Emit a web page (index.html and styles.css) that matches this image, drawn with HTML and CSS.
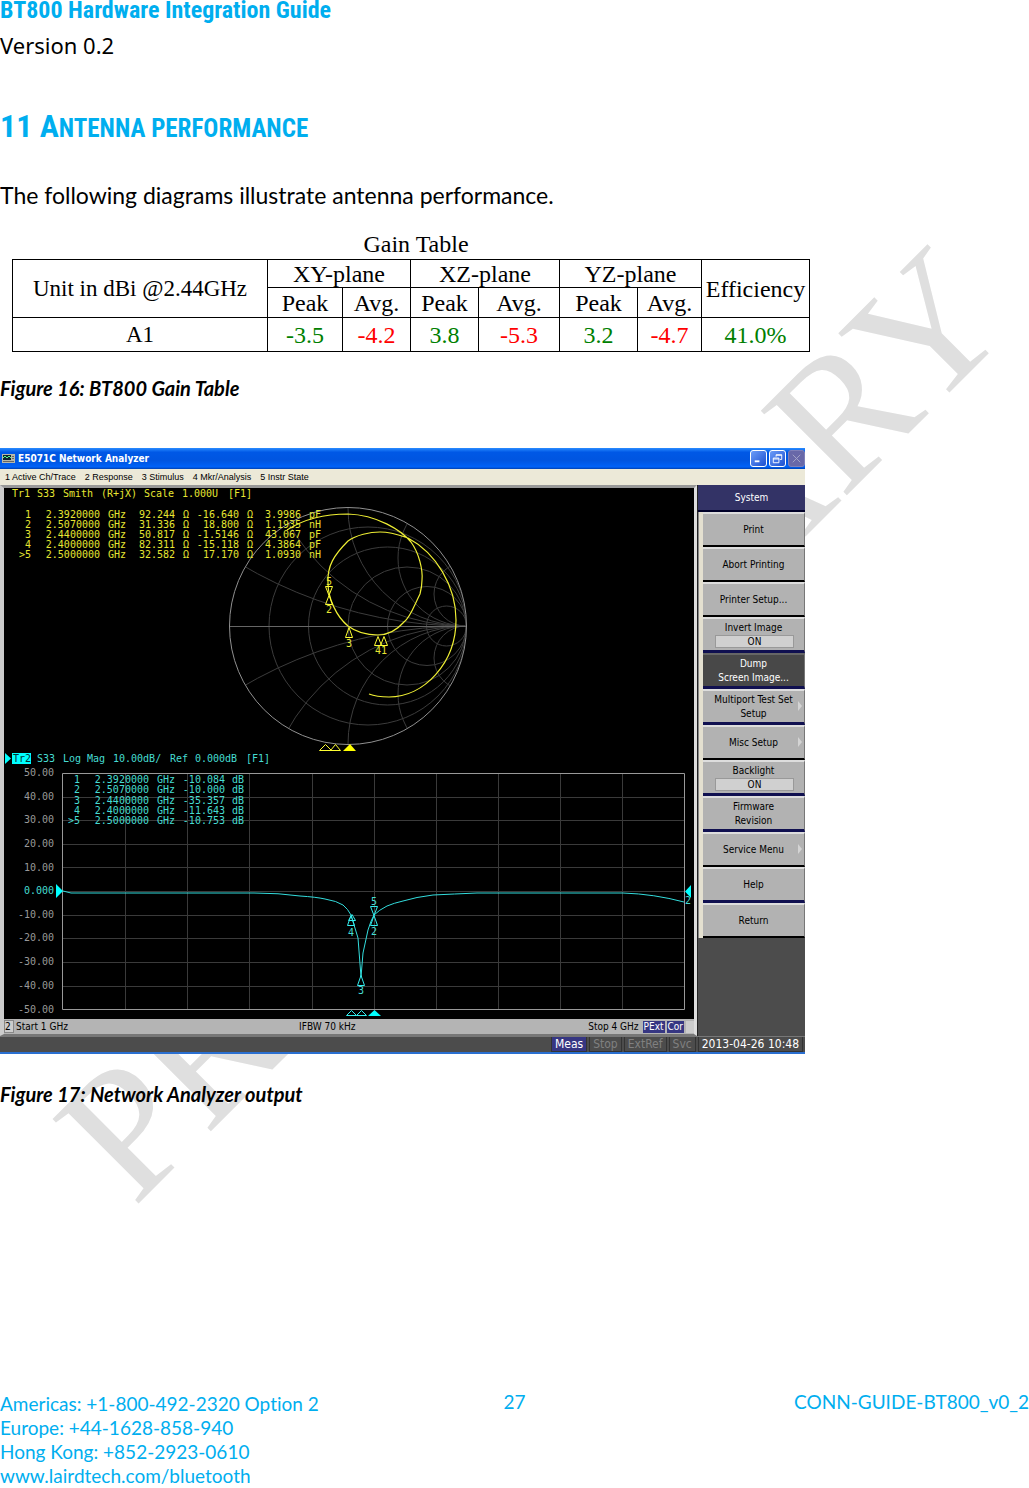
FILE: index.html
```html
<!DOCTYPE html>
<html lang="en">
<head>
<meta charset="utf-8">
<meta name="viewport" content="width=device-width, initial-scale=1">
<title>BT800 Hardware Integration Guide</title>
<link rel="stylesheet" href="styles.css">
</head>
<body>
<div class="page">
  <svg class="watermark" viewBox="0 0 1029 1488" aria-hidden="true">
    <text transform="translate(134 1208) rotate(-45)">PRELIMINARY</text>
  </svg>

  <header class="doc-header">
    <p class="doc-title">BT800 Hardware Integration Guide</p>
    <p class="doc-version">Version 0.2</p>
  </header>

  <main>
    <h1 class="section-title">11 A<span class="small-caps">NTENNA PERFORMANCE</span></h1>
    <p class="intro">The following diagrams illustrate antenna performance.</p>

    <figure class="gain">
      <div class="gain-sheet">
        <table class="gain-table">
          <caption>Gain Table</caption>
          <colgroup>
            <col class="c-unit"><col class="c-xyp"><col class="c-xya"><col class="c-xzp"><col class="c-xza"><col class="c-yzp"><col class="c-yza"><col class="c-eff">
          </colgroup>
          <thead>
            <tr class="row-plane"><th class="unit" rowspan="2">Unit in dBi @2.44GHz</th><th colspan="2">XY-plane</th><th colspan="2">XZ-plane</th><th colspan="2">YZ-plane</th><th rowspan="2">Efficiency</th></tr>
            <tr class="row-kind"><th>Peak</th><th>Avg.</th><th>Peak</th><th>Avg.</th><th>Peak</th><th>Avg.</th></tr>
          </thead>
          <tbody>
            <tr class="row-data"><th class="unit">A1</th><td class="good">-3.5</td><td class="bad">-4.2</td><td class="good">3.8</td><td class="bad">-5.3</td><td class="good">3.2</td><td class="bad">-4.7</td><td class="good">41.0%</td></tr>
          </tbody>
        </table>
      </div>
      <figcaption>Figure 16: BT800 Gain Table</figcaption>
    </figure>

    <figure class="analyzer-figure">
      <div class="analyzer">
        <div class="titlebar">
          <svg class="app-icon" viewBox="0 0 13 11" aria-hidden="true"><path fill="#b8b8a8" d="M0 1h13v9H0z"/><path fill="#123" d="M1 2h8v5H1z"/><path fill="none" stroke="#5f8" d="M1 5l2-2 2 2 2-2 2 2"/><path fill="#666" d="M10 3h2v1h-2zM10 5h2v1h-2zM1 8h11v1H1z"/></svg>
          <span class="app-name">E5071C Network Analyzer</span>
          <button class="win" type="button" aria-label="Minimize"><svg viewBox="0 0 16 16"><path fill="#fff" d="M4 10h5v2H4z"/></svg></button>
          <button class="win" type="button" aria-label="Restore"><svg viewBox="0 0 16 16"><path fill="none" stroke="#fff" d="M6.500 6V4h6v5h-2M3.500 7.500h6v5h-6zM3.500 8.500h6M6.500 4.500h6"/></svg></button>
          <button class="win off" type="button" aria-label="Close"><svg viewBox="0 0 16 16"><path fill="none" stroke="#a5a5c8" d="M4 4l8 8M12 4l-8 8"/></svg></button>
        </div>
        <nav class="menubar">
          <button type="button">1 Active Ch/Trace</button>
          <button type="button">2 Response</button>
          <button type="button">3 Stimulus</button>
          <button type="button">4 Mkr/Analysis</button>
          <button type="button">5 Instr State</button>
        </nav>
        <div class="work">
          <div class="channel">
            <svg class="plots" viewBox="0 0 690 531" role="img" aria-label="Smith chart and log magnitude traces">
              <defs><clipPath id="unit"><circle r="118"/></clipPath></defs>

              <!-- Smith chart -->
              <g transform="translate(344 138)" fill="none">
                <g stroke="#3c3c3c" clip-path="url(#unit)">
                  <circle cx="20" r="99"/><circle cx="39.500" r="79"/><circle cx="59" r="59"/><circle cx="79" r="39.500"/><circle cx="98.500" r="20"/>
                  <circle cx="118" cy="-442" r="442"/><circle cx="118" cy="442" r="442"/>
                  <circle cx="118" cy="-205" r="205"/><circle cx="118" cy="205" r="205"/>
                  <circle cx="118" cy="-118" r="118"/><circle cx="118" cy="118" r="118"/>
                  <circle cx="118" cy="-68" r="68"/><circle cx="118" cy="68" r="68"/>
                  <circle cx="118" cy="-32" r="32"/><circle cx="118" cy="32" r="32"/>
                </g>
                <circle r="118.500" stroke="#909090"/>
                <path stroke="#666" d="M-118 .500H118"/>
              </g>
              <path fill="none" stroke="#ee3" stroke-width="1.200" d="M283 42C300 31 322 26 344 26C373 27 397 42 407 54C415 65 419 82 418 92C418 98 417 102 416 106C410 118 406 130 400 134C392 143 384 147 374 147C362 147 352 144 344 138C332 128 324 110 324 95C323 78 330 67 344 53C352 47 366 44 376 44C388 44 398 48 404 50C432 65 452 98 452 132C452 175 420 209 385 209C377 209 370 208 365 206"/>
              <g fill="none" stroke="#ff3">
                <path d="M321.500 98.500h7l-3.500 9zM321.500 116.500h7l-3.500-9zM341.500 149.500h7l-3.500-10zM370.500 157.500h7l-3.500-9zM376.500 157.500h7l-3.500-9zM315.500 262.500h12l-6-6zM326.500 262.500h10l-5-6z"/>
                <path fill="#ff0" stroke="none" d="M339 263h13l-6-7z"/>
              </g>
              <g class="mono yellow">
                <text x="8" y="9">Tr1</text><text x="33" y="9">S33</text><text x="59" y="9">Smith</text><text x="97" y="9">(R+jX)</text><text x="140" y="9">Scale</text><text x="178" y="9">1.000U</text><text x="224" y="9">[F1]</text>
                <g class="end">
                  <text x="27" y="30">1</text><text x="96" y="30">2.3920000</text><text x="122" y="30">GHz</text><text x="171" y="30">92.244</text><text x="185" y="30">Ω</text><text x="235" y="30">-16.640</text><text x="249" y="30">Ω</text><text x="297" y="30">3.9986</text><text x="317" y="30">pF</text>
                  <text x="27" y="40">2</text><text x="96" y="40">2.5070000</text><text x="122" y="40">GHz</text><text x="171" y="40">31.336</text><text x="185" y="40">Ω</text><text x="235" y="40">18.800</text><text x="249" y="40">Ω</text><text x="297" y="40">1.1935</text><text x="317" y="40">nH</text>
                  <text x="27" y="50">3</text><text x="96" y="50">2.4400000</text><text x="122" y="50">GHz</text><text x="171" y="50">50.817</text><text x="185" y="50">Ω</text><text x="235" y="50">-1.5146</text><text x="249" y="50">Ω</text><text x="297" y="50">43.067</text><text x="317" y="50">pF</text>
                  <text x="27" y="60">4</text><text x="96" y="60">2.4000000</text><text x="122" y="60">GHz</text><text x="171" y="60">82.311</text><text x="185" y="60">Ω</text><text x="235" y="60">-15.118</text><text x="249" y="60">Ω</text><text x="297" y="60">4.3864</text><text x="317" y="60">pF</text>
                  <text x="27" y="70">&gt;5</text><text x="96" y="70">2.5000000</text><text x="122" y="70">GHz</text><text x="171" y="70">32.582</text><text x="185" y="70">Ω</text><text x="235" y="70">17.170</text><text x="249" y="70">Ω</text><text x="297" y="70">1.0930</text><text x="317" y="70">nH</text>
                </g>
                <text x="322" y="97">5</text><text x="322" y="125">2</text><text x="342" y="159">3</text><text x="371" y="166">41</text>
              </g>

              <!-- Log magnitude -->
              <path fill="none" stroke="#3a3a3a" d="M121.500 285v236M183.500 285v236M245.500 285v236M308.500 285v236M370.500 285v236M432.500 285v236M494.500 285v236M556.500 285v236M618.500 285v236M59 309.500h621M59 332.500h621M59 356.500h621M59 379.500h621M59 403.500h621M59 427.500h621M59 450.500h621M59 474.500h621M59 498.500h621"/>
              <path fill="none" stroke="#999" d="M58.500 285.500h622v236h-622z"/>
              <path fill="#0ff" d="M1 265v11l6-5.500zM52 396v14l7-7zM687 397v13l-6-6.500zM8 265h19v11H8z"/>
              <path fill="none" stroke="#3dd" d="M59 403L67 405H250Q275 405 296 408Q312 409 321 411Q333 413 339 417Q344 421 347 427L354 450L357 489L359 465L364 442Q367 432 370 427Q375 422 383 418Q390 415 399 413Q412 409 429 407Q450 406 473 405H619Q650 406 680 414"/>
              <g fill="none" stroke="#3ee">
                <path d="M343.500 437.500h7l-3.500-10zM344.500 432.500h7l-3.500-6zM353.500 497.500h7l-3.500-10zM366.500 437.500h7l-3.500-10zM366.500 418.500h7l-3.500 9zM342.500 527.500h10l-5-5zM352.500 527.500h10l-5-5z"/>
                <path fill="#0ff" stroke="none" d="M364 528h13l-6.500-6z"/>
              </g>
              <g class="mono cyan">
                <text class="on-cyan" x="9" y="274">Tr2</text><text x="33" y="274">S33</text><text x="59" y="274">Log Mag</text><text x="109" y="274">10.00dB/</text><text x="166" y="274">Ref</text><text x="191" y="274">0.000dB</text><text x="242" y="274">[F1]</text>
                <g class="end">
                  <text x="76" y="295">1</text><text x="145" y="295">2.3920000</text><text x="171" y="295">GHz</text><text x="221" y="295">-10.084</text><text x="240" y="295">dB</text>
                  <text x="76" y="305">2</text><text x="145" y="305">2.5070000</text><text x="171" y="305">GHz</text><text x="221" y="305">-10.000</text><text x="240" y="305">dB</text>
                  <text x="76" y="316">3</text><text x="145" y="316">2.4400000</text><text x="171" y="316">GHz</text><text x="221" y="316">-35.357</text><text x="240" y="316">dB</text>
                  <text x="76" y="326">4</text><text x="145" y="326">2.4000000</text><text x="171" y="326">GHz</text><text x="221" y="326">-11.643</text><text x="240" y="326">dB</text>
                  <text x="76" y="336">&gt;5</text><text x="145" y="336">2.5000000</text><text x="171" y="336">GHz</text><text x="221" y="336">-10.753</text><text x="240" y="336">dB</text>
                  <text x="50" y="406">0.000</text>
                </g>
                <text x="344" y="448">4</text><text x="354" y="506">3</text><text x="367" y="447">2</text><text x="367" y="417">5</text><text x="681" y="416">2</text>
              </g>
              <g class="mono gray end">
                <text x="50" y="288">50.00</text><text x="50" y="312">40.00</text><text x="50" y="335">30.00</text><text x="50" y="359">20.00</text><text x="50" y="383">10.00</text>
                <text x="50" y="430">-10.00</text><text x="50" y="453">-20.00</text><text x="50" y="477">-30.00</text><text x="50" y="501">-40.00</text><text x="50" y="525">-50.00</text>
              </g>
            </svg>
            <div class="sweep">
              <span class="ch-no">2</span>
              <span class="start">Start 1 GHz</span>
              <span class="ifbw">IFBW 70 kHz</span>
              <span class="stop">Stop 4 GHz</span>
              <span class="flag">PExt</span>
              <span class="flag">Cor</span>
              <span class="blank"></span>
            </div>
          </div>
          <aside class="softkeys">
            <h2>System</h2>
            <div class="keys">
              <button type="button">Print</button>
              <button type="button">Abort Printing</button>
              <button type="button">Printer Setup...</button>
              <button type="button" class="group-end">Invert Image<span class="value">ON</span></button>
              <button type="button" class="group-end dark">Dump<br>Screen Image...</button>
              <button type="button" class="group-end more">Multiport Test Set<br>Setup</button>
              <button type="button" class="more">Misc Setup</button>
              <button type="button" class="group-end">Backlight<span class="value">ON</span></button>
              <button type="button" class="group-end">Firmware<br>Revision</button>
              <button type="button" class="more">Service Menu</button>
              <button type="button" class="group-end">Help</button>
              <button type="button">Return</button>
            </div>
          </aside>
        </div>
        <div class="statusbar">
          <span class="st active">Meas</span><span class="st">Stop</span><span class="st">ExtRef</span><span class="st">Svc</span><span class="st clock">2013-04-26 10:48</span>
        </div>
      </div>
      <figcaption>Figure 17: Network Analyzer output</figcaption>
    </figure>
  </main>

  <footer class="doc-footer">
    <address>
      Americas: +1-800-492-2320 Option 2<br>
      Europe: +44-1628-858-940<br>
      Hong Kong: +852-2923-0610<br>
      <a href="http://www.lairdtech.com/bluetooth">www.lairdtech.com/bluetooth</a>
    </address>
    <span class="page-no">27</span>
    <span class="doc-id">CONN-GUIDE-BT800_v0_2</span>
  </footer>
</div>
</body>
</html>
```
FILE: styles.css
```css
* { box-sizing: border-box; }

body {
  margin: 0;
  background: #fff;
  color: #000;
  font-family: Lato, "Open Sans", sans-serif;
  font-variant-ligatures: none;
}

p, h1, h2, figure { margin: 0; }

button {
  margin: 0;
  padding: 0;
  border: 0;
  background: none;
  color: inherit;
  font: inherit;
}

.page {
  position: relative;
  display: flex;
  flex-direction: column;
  min-height: 100vh;
}

/* Watermark lies behind the text and the figures */
.watermark {
  position: absolute;
  z-index: -1;
  top: 0;
  left: 0;
  width: 100%;
}
.watermark text {
  fill: #dfdfdf;
  font: 184px "Liberation Serif", serif;
}

.doc-title {
  color: #00aeef;
  font: bold 24px/20px "Liberation Sans Narrow", "Roboto Condensed", "Liberation Sans", sans-serif;
}
.doc-version {
  padding-top: 12px;
  font: 22px/26px "Noto Sans", sans-serif;
}

.section-title {
  margin-top: 48px;
  color: #00aeef;
  font: bold 32px/40px "Liberation Sans Narrow", "Roboto Condensed", "Liberation Sans", sans-serif;
}
.small-caps { font-size: 25px; }

.intro {
  margin-top: 33px;
  font-size: 23px;
  line-height: 26px;
}

figcaption {
  font-size: 20px;
  font-weight: bold;
  font-style: italic;
  line-height: 24px;
}

/* Gain table */
.gain-sheet {
  max-width: 826px;
  margin-top: 22px;
  padding: 0 16px 4px 12px;
  background: #fff;
}
.gain-table {
  width: 100%;
  table-layout: fixed;
  border-collapse: collapse;
  font: 24px/26px "Liberation Serif", serif;
  text-align: center;
}
.gain-table caption { padding-left: 10px; line-height: 29px; }
.gain-table th, .gain-table td {
  padding: 0;
  border: 1px solid #000;
  font-weight: normal;
}
.gain-table .unit { font-size: 23px; }
.c-unit { width: 255px; }
.c-xyp { width: 75px; }
.c-xya { width: 68px; }
.c-xzp { width: 68px; }
.c-xza { width: 81px; }
.c-yzp { width: 78px; }
.c-yza { width: 64px; }
.row-plane { height: 28px; }
.row-kind { height: 30px; }
.row-data { height: 34px; }
.good { color: #008000; }
.bad { color: #f00; }
.gain figcaption { margin-top: 20px; }

/* Analyzer screen */
.analyzer {
  display: flex;
  flex-direction: column;
  max-width: 805px;
  margin: 48px 0 28px;
  border-bottom: 2px solid #2a6fd0;
  background: #4c4c4c;
  font: 9px/12px "DejaVu Sans Condensed", "DejaVu Sans", sans-serif;
}
.titlebar {
  display: flex;
  align-items: center;
  gap: 2px;
  height: 21px;
  padding-left: 2px;
  background: linear-gradient(#2a8cff, #0058e6 20%, #0055e0 60%, #0062f8 90%, #0040b0);
  color: #fff;
}
.app-icon { width: 13px; height: 11px; }
.app-name { flex: 1; padding-left: 1px; font-size: 10px; font-weight: bold; }
.win {
  width: 17px;
  height: 17px;
  border: 1px solid #fff;
  border-radius: 3px;
  background: linear-gradient(135deg, #6c9cf8, #1c4fd0);
}
.win svg { display: block; width: 15px; height: 15px; }
.win.off { border-color: #8080b8; background: #6868a8; }

.menubar {
  display: flex;
  gap: 9px;
  height: 16px;
  padding-left: 5px;
  background: #ece9d8;
  color: #000;
  font-family: "Liberation Sans", sans-serif;
}

.work { display: flex; }
.channel {
  flex: 1;
  min-width: 0;
  border: solid #999;
  border-width: 3px 3px 2px 4px;
  border-color: #999 #ddd #777 #ccc;
}
.plots { display: block; width: 100%; background: #000; }
.mono { font: 10px "DejaVu Sans Mono", monospace; }
.yellow { fill: #e6e632; }
.cyan { fill: #46dcd2; }
.gray { fill: #999; }
.end { text-anchor: end; }
.on-cyan { fill: #033; }

.sweep {
  display: flex;
  align-items: center;
  gap: 2px;
  height: 15px;
  background: #b4b4b4;
  color: #000;
  font-size: 10px;
}
.ch-no { width: 10px; border: 1px solid #888; background: #ccc; line-height: 11px; }
.start, .stop { flex: 1; }
.stop { text-align: right; padding-right: 2px; }
.flag { padding: 0 1px; background: #363682; color: #fff; }
.blank { width: 8px; height: 12px; background: #ccc; }

.softkeys {
  width: 108px;
  border-left: 1px solid #222;
  text-align: center;
}
.softkeys h2 {
  height: 27px;
  border-bottom: 2px solid #000028;
  background: #333366;
  color: #fff;
  font-size: 10px;
  font-weight: normal;
  line-height: 25px;
}
.keys {
  display: flex;
  flex-direction: column;
  height: 426px;
  padding-left: 4px;
  border-left: 1px solid #888;
  background: #e4e0d0;
}
.keys button {
  position: relative;
  flex: 1 1 0;
  border-top: 2px solid #ddd;
  border-right: 1px solid #777;
  border-bottom: 2px solid #000;
  background: #b2b2b2;
  color: #000;
  font-size: 10px;
  line-height: 14px;
}
.keys .group-end { border-bottom: 3px solid #101050; }
.keys .dark { background: #484848; color: #fff; border-top-color: #666; }
.value {
  display: block;
  margin: 0 10px 0 12px;
  border: 1px solid #999;
  background: #d0d0d0;
  line-height: 11px;
}
.more::after {
  content: "";
  position: absolute;
  top: 10px;
  right: 2px;
  border: 5px solid transparent;
  border-left: 4px solid #d4d4d4;
  border-right: 0;
}

.statusbar {
  display: flex;
  justify-content: flex-end;
  gap: 2px;
  height: 16px;
  padding-right: 2px;
  border-top: 1px solid #777;
  font-size: 12px;
  line-height: 14px;
}
.st {
  padding: 0 3px;
  border: 1px solid #333;
  border-top: 0;
  color: #808080;
}
.st.active { background: #363682; color: #fff; }
.st.clock { color: #fff; }

/* Footer */
.doc-footer {
  display: grid;
  grid-template-columns: 1fr auto 1fr;
  margin-top: auto;
  color: #00aeef;
  font-size: 19px;
  line-height: 24px;
}
.doc-footer address { font-style: normal; }
.doc-footer a { color: inherit; text-decoration: none; }
.page-no, .doc-id { line-height: 20px; }
.doc-id { text-align: right; }
```
